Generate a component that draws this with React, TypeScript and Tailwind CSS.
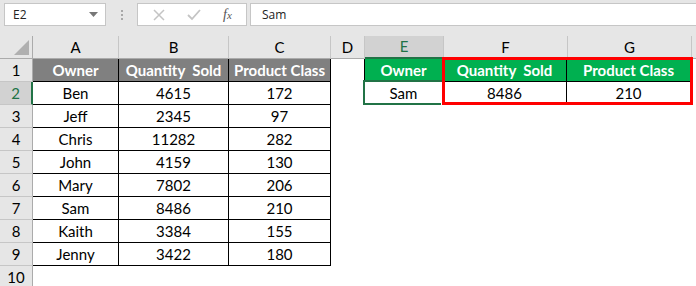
import { Fragment } from 'react';

const font = { fontFamily: 'Lato, "Open Sans", sans-serif' };

const colWidths = ['w-[86px]', 'w-[110px]', 'w-[102px]', 'w-[34px]', 'w-[79px]', 'w-[124px]', 'w-[124px]'];
const colNames = ['A', 'B', 'C', 'D', 'E', 'F', 'G'];

const data = [
  ['Ben', '4615', '172'],
  ['Jeff', '2345', '97'],
  ['Chris', '11282', '282'],
  ['John', '4159', '130'],
  ['Mary', '7802', '206'],
  ['Sam', '8486', '210'],
  ['Kaith', '3384', '155'],
  ['Jenny', '3422', '180'],
];

function FormulaBar() {
  return (
    <div className="h-[36px] bg-[#e6e6e6] flex items-start pt-[3px] pl-[4px]">
      <div className="w-[102px] h-[23px] bg-white border border-[#c6c6c6] flex items-center justify-between pl-[8px] pr-[7px]">
        <span className="text-[12px] text-[#222]" style={{ fontFamily: '"Open Sans", sans-serif' }}>E2</span>
        <svg width="9" height="5" viewBox="0 0 9 5">
          <path d="M0 0 L9 0 L4.5 5 Z" fill="#777" />
        </svg>
      </div>
      <div className="w-[31px] h-[23px] flex flex-col items-center justify-center gap-[2px]">
        <span className="w-[2px] h-[2px] bg-[#a8a8a8]" />
        <span className="w-[2px] h-[2px] bg-[#a8a8a8]" />
        <span className="w-[2px] h-[2px] bg-[#a8a8a8]" />
      </div>
      <div className="w-[110px] h-[23px] bg-white border border-[#c6c6c6] flex items-center">
        <svg width="14" height="14" viewBox="0 0 14 14" className="ml-[14px]">
          <path d="M2 2 L12 12 M12 2 L2 12" stroke="#c4c4c4" strokeWidth="1.5" />
        </svg>
        <svg width="14" height="12" viewBox="0 0 14 12" className="ml-[21px]">
          <path d="M1 6 L5 10 L13 1" stroke="#c4c4c4" strokeWidth="1.8" fill="none" />
        </svg>
        <span
          className="ml-[22px] text-[14px] italic text-[#555]"
          style={{ fontFamily: '"Liberation Serif", serif' }}
        >
          f<span className="text-[11px]">x</span>
        </span>
      </div>
      <div className="ml-[3px] flex-1 h-[23px] bg-white border border-[#c6c6c6] border-r-0 flex items-center pl-[11px]">
        <span className="text-[12px] text-[#222]" style={{ fontFamily: '"Open Sans", sans-serif' }}>Sam</span>
      </div>
    </div>
  );
}

function HeaderRow() {
  return (
    <div className="flex h-[23px]">
      <div className="w-[33px] h-full shrink-0 bg-[#e6e6e6] border-r border-b border-[#ababab]" />
      {colNames.map((c, i) => {
        const sel = c === 'E';
        return (
          <div
            key={c}
            className={
              colWidths[i] +
              ' h-full flex items-center justify-center text-[15px] border-r border-[#c6c6c6] ' +
              (sel
                ? 'bg-[#d2d2d2] text-[#217346] border-b-2 border-b-[#217346]'
                : 'bg-[#e6e6e6] text-black border-b border-b-[#ababab]')
            }
          >
            {c}
          </div>
        );
      })}
      <div className="flex-1 h-full bg-[#e6e6e6] border-b border-[#ababab]" />
    </div>
  );
}

function RowHead({ n, selected }: { n: number; selected?: boolean }) {
  return (
    <div
      className={
        'w-[33px] h-full flex items-center justify-center text-[15px] border-b border-[#c6c6c6] ' +
        (selected
          ? 'bg-[#d2d2d2] text-[#217346] border-r-2 border-r-[#217346]'
          : 'bg-[#e6e6e6] text-black border-r border-r-[#ababab]')
      }
    >
      {n}
    </div>
  );
}

export default function App() {
  const rows: string[][] = [
    ['Owner', 'Quantity  Sold', 'Product Class', '', 'Owner', 'Quantity  Sold', 'Product Class'],
    ...data.map((d, i) => (i === 0 ? [...d, '', 'Sam', '8486', '210'] : [...d, '', '', '', ''])),
    ['', '', '', '', '', '', ''],
  ];

  return (
    <div className="w-[696px] h-[286px] bg-white relative overflow-hidden" style={font}>
      <FormulaBar />
      <HeaderRow />
      {rows.map((r, ri) => (
        <div key={ri} className="flex h-[23px]">
          <RowHead n={ri + 1} selected={ri === 1} />
          {r.map((v, ci) => {
            const inTable = ri < 9 && ci < 3;
            const inSmall = ri < 2 && ci >= 4;
            const bordered = inTable || inSmall;
            let bg = 'bg-white text-black';
            if (ri === 0 && inTable) bg = 'bg-[#808080] text-white font-bold';
            if (ri === 0 && inSmall) bg = 'bg-[#00b050] text-white font-bold';
            return (
              <Fragment key={ci}>
                <div
                  className={
                    colWidths[ci] +
                    ' h-full flex items-center justify-center text-[15px] whitespace-pre ' +
                    bg +
                    (bordered ? ' border-r border-b border-black' : '') +
                    (inSmall && ci === 4 ? ' border-l border-l-black -ml-px' : '')
                  }
                >
                  {v}
                </div>
              </Fragment>
            );
          })}
        </div>
      ))}

      {/* select-all corner triangle */}
      <svg width="15" height="15" viewBox="0 0 15 15" className="absolute left-[14px] top-[40px]">
        <path d="M15 0 L15 15 L0 15 Z" fill="#b0b0b0" />
      </svg>

      {/* active cell E2 */}
      <div className="absolute left-[363px] top-[80px] w-[82px] h-[25px] border-2 border-[#217346]" />
      <div className="absolute left-[441px] top-[101px] w-[5px] h-[5px] bg-[#217346] border border-white" />

      {/* red highlight box */}
      <div className="absolute left-[442px] top-[57px] w-[251px] h-[48px] border-[3px] border-[#ff0000]" />
    </div>
  );
}
